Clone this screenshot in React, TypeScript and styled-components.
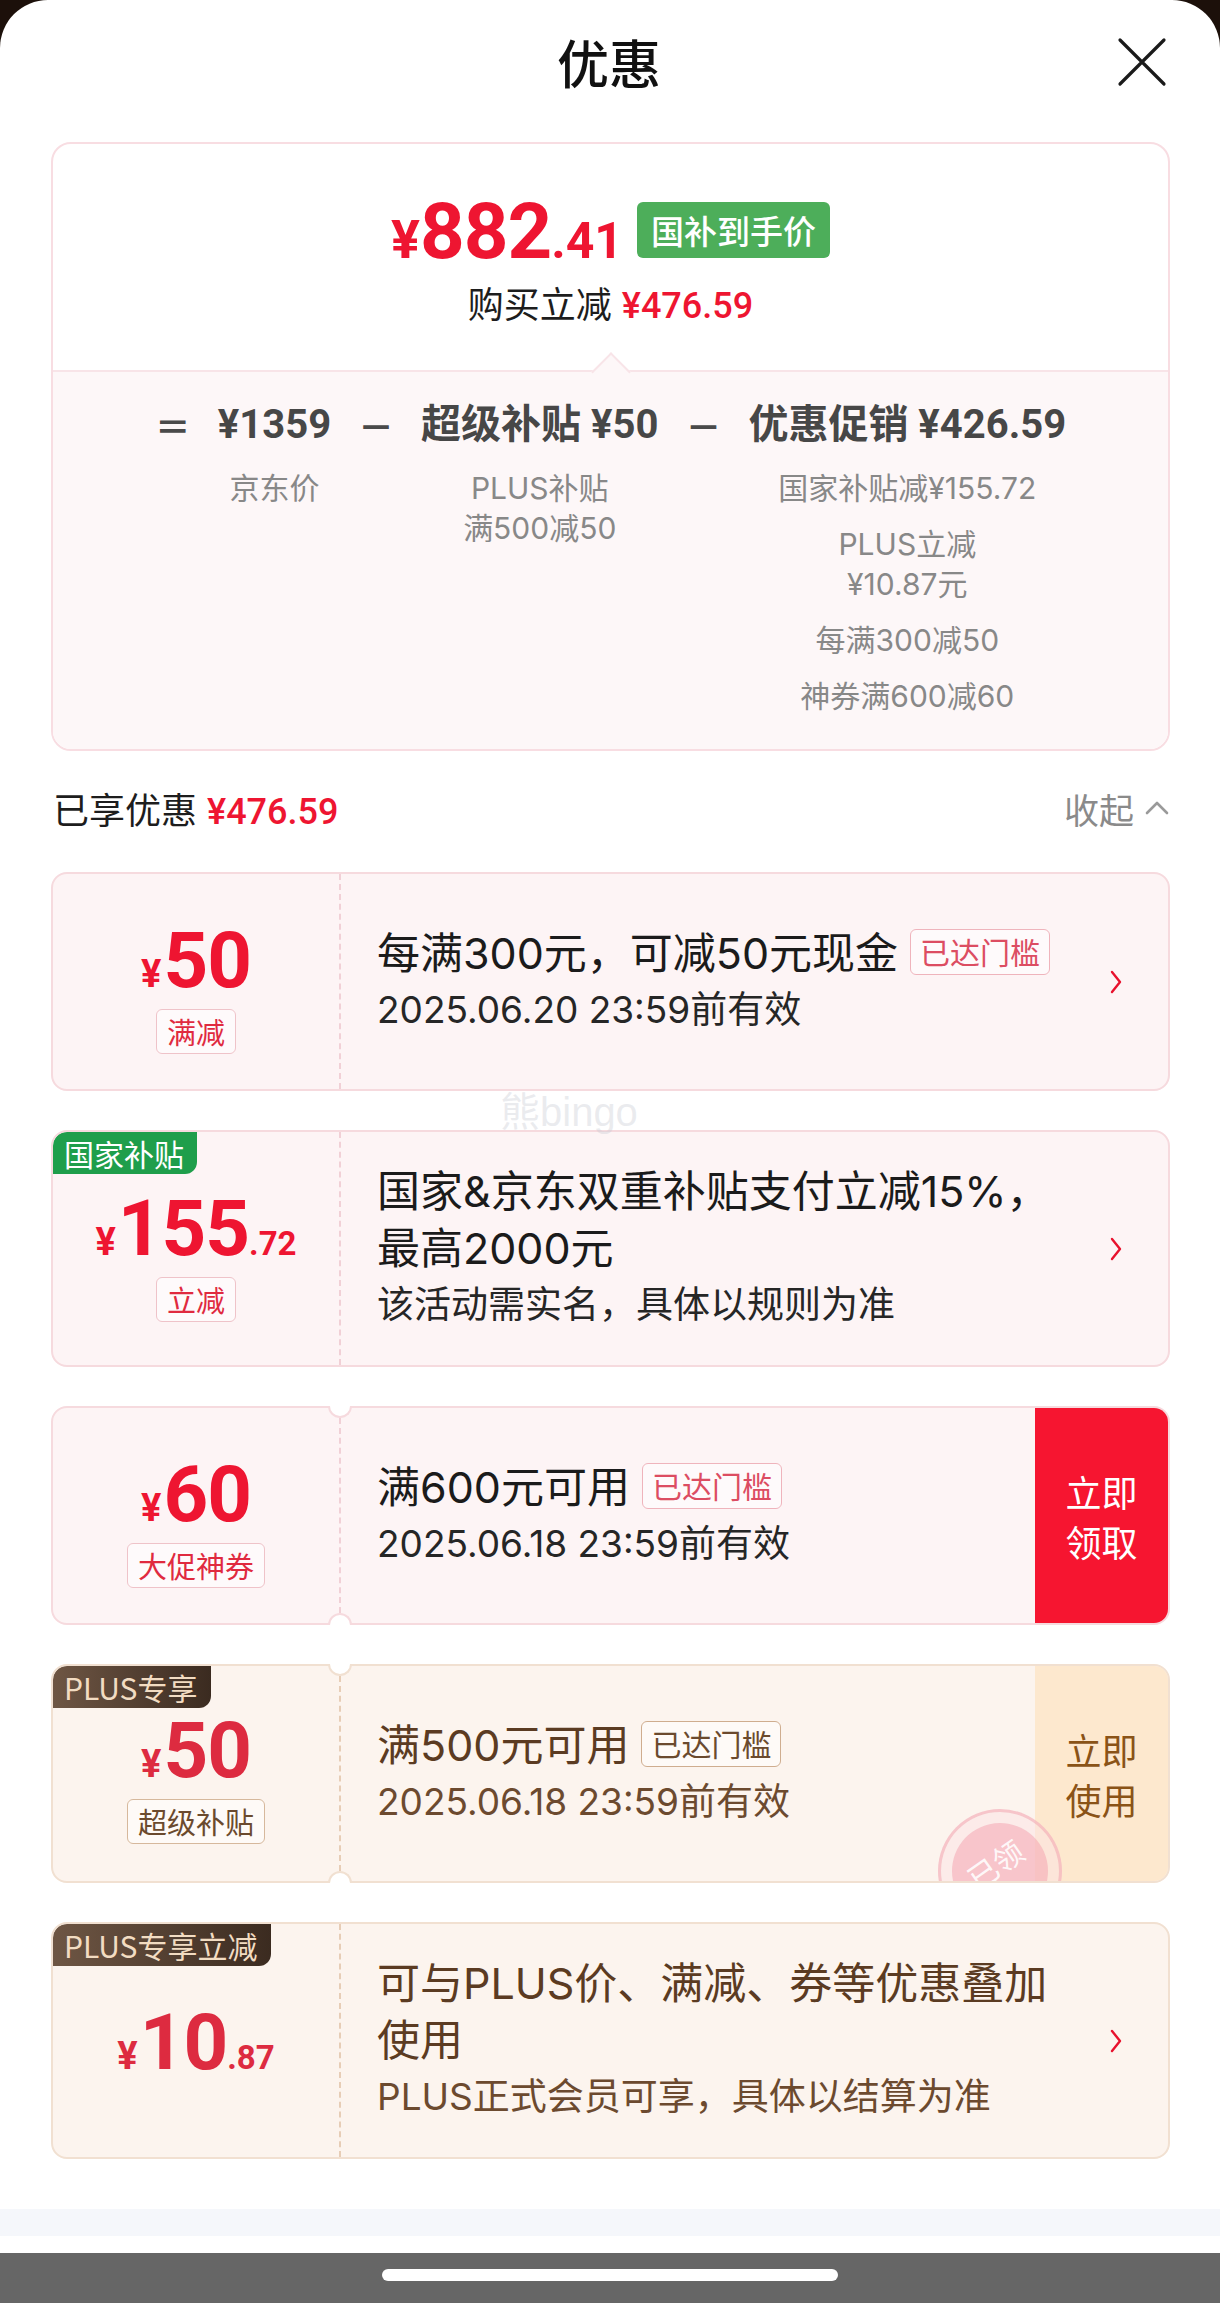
import React from "react";
import styled, { createGlobalStyle, css } from "styled-components";

type Tone = "red" | "plus";

const RED = "#ee1531";
const MIXED = `Inter, "Noto Sans CJK SC", sans-serif`;

const pal = {
  red: {
    bg: "#fdf4f5",
    border: "#f6dade",
    divider: "#f1d0d6",
    amount: "#ee1531",
    title: "#1b1b1b",
    sub: "#262626",
    tagText: "#e02a3f",
    tagBorder: "#efc3c9",
    thText: "#dc4d62",
    thBorder: "#efb4bc",
  },
  plus: {
    bg: "#fcf4ee",
    border: "#f1e0d1",
    divider: "#e7cdb6",
    amount: "#dd2b40",
    title: "#5b3b22",
    sub: "#6c4a2f",
    tagText: "#6b4a2e",
    tagBorder: "#d6b89c",
    thText: "#6b4a2e",
    thBorder: "#cfad8f",
  },
};

const GlobalStyle = createGlobalStyle`
  * { box-sizing: border-box; }
  html, body { margin: 0; padding: 0; }
  body {
    background: #1c100a;
    font-family: "Noto Sans CJK SC", "Noto Sans", sans-serif;
    color: #1b1b1b;
  }
`;

const Sheet = styled.div`
  position: relative;
  width: 1220px;
  height: 2303px;
  background: #fff;
  border-radius: 48px 48px 0 0;
  overflow: hidden;
  display: flex;
  flex-direction: column;
`;

const Header = styled.header`
  height: 124px;
  flex-shrink: 0;
  display: grid;
  grid-template-columns: 1fr auto 1fr;
  align-items: center;
  padding: 0 53px 0 51px;
`;

const SheetTitle = styled.h1`
  grid-column: 2;
  margin: 0;
  font-size: 52px;
  line-height: 1;
  font-weight: 500;
  color: #111;
`;

const CloseButton = styled.button`
  grid-column: 3;
  justify-self: end;
  width: 50px;
  height: 50px;
  padding: 0;
  border: 0;
  background: none;
  display: flex;
`;

const Main = styled.main`
  display: flex;
  flex-direction: column;
  padding: 18px 50px 0 51px;
`;

/* ---------- summary card ---------- */

const SummaryCard = styled.section`
  border: 2px solid #f8dde2;
  border-radius: 20px;
  overflow: hidden;
  background: #fff;
`;

const SummaryTop = styled.div`
  height: 226px;
  display: flex;
  flex-direction: column;
  align-items: center;
  padding-top: 56px;
`;

const PriceRow = styled.div`
  height: 60px;
  display: flex;
  align-items: center;
  gap: 14px;
`;

const BigPrice = styled.div`
  display: flex;
  align-items: baseline;
  color: ${RED};
  font-family: Roboto, sans-serif;
  font-weight: 700;
  line-height: 1;
  transform: translateY(2px);
`;

const BigYen = styled.span`
  font-size: 54px;
`;
const BigInt = styled.span`
  font-size: 78px;
  letter-spacing: -1px;
`;
const BigDec = styled.span`
  font-size: 50px;
`;

const GreenBadge = styled.span`
  height: 56px;
  padding: 0 14px;
  border-radius: 6px;
  background: #4dae5a;
  color: #fff;
  font-size: 33px;
  line-height: 56px;
  font-weight: 500;
`;

const SubLine = styled.div`
  margin-top: 22px;
  font-size: 36px;
  line-height: 40px;
  color: #1d1d1d;
  display: flex;
  align-items: baseline;
  gap: 10px;
`;

const RedNum = styled.span`
  color: ${RED};
  font-family: Roboto, "Noto Sans CJK SC", sans-serif;
  font-weight: 500;
  font-size: 36px;
`;

const SummaryBottom = styled.div`
  position: relative;
  background: #fdf7f8;
  border-top: 2px solid #f8e4e8;
  padding: 30px 0 33px;
  display: flex;
  justify-content: center;
  align-items: flex-start;
  gap: 27px;

  &::before {
    content: "";
    position: absolute;
    top: -14px;
    left: 50%;
    width: 26px;
    height: 26px;
    background: #fdf7f8;
    border-top: 2px solid #f8e4e8;
    border-left: 2px solid #f8e4e8;
    transform: translateX(-50%) rotate(45deg);
  }
`;

const Op = styled.span`
  font-family: "Noto Sans CJK SC", sans-serif;
  font-size: 36px;
  font-weight: 700;
  line-height: 46px;
  color: #4a4a4a;
`;

const Group = styled.div`
  display: flex;
  flex-direction: column;
  align-items: center;
`;

const GroupValue = styled.div`
  font-family: Roboto, "Noto Sans CJK SC", sans-serif;
  font-size: 40px;
  font-weight: 700;
  line-height: 46px;
  color: #474747;
  white-space: nowrap;
`;

const GroupNotes = styled.div`
  margin-top: 20px;
  display: flex;
  flex-direction: column;
  align-items: center;
  gap: 16px;
`;

const Note = styled.div`
  font-family: ${MIXED};
  font-size: 30px;
  line-height: 40px;
  color: #888;
  text-align: center;
  white-space: nowrap;
`;

/* ---------- discounts header ---------- */

const DiscountRow = styled.div`
  margin: 33px 0 40px;
  height: 48px;
  display: flex;
  align-items: center;
  justify-content: space-between;
  padding-left: 2px;
`;

const DiscountLabel = styled.div`
  font-size: 36px;
  color: #1d1d1d;
  display: flex;
  align-items: baseline;
  gap: 10px;
`;

const Collapse = styled.button`
  border: 0;
  background: none;
  padding: 0;
  display: flex;
  align-items: center;
  gap: 10px;
  font-family: inherit;
  font-size: 35px;
  color: #8a8a8a;
`;

/* ---------- coupons ---------- */

const CouponList = styled.div`
  display: flex;
  flex-direction: column;
  gap: 39px;
`;

const CouponWrap = styled.div`
  position: relative;
`;

const CouponCard = styled.article<{ $tone: Tone; $minH: number }>`
  position: relative;
  display: grid;
  grid-template-columns: 288px 1fr auto;
  min-height: ${(p) => p.$minH}px;
  background: ${(p) => pal[p.$tone].bg};
  border: 2px solid ${(p) => pal[p.$tone].border};
  border-radius: 16px;
  overflow: hidden;
`;

const CornerBadge = styled.span<{ $kind: "green" | "plus" }>`
  position: absolute;
  top: 0;
  left: 0;
  z-index: 2;
  height: 42px;
  padding: 0 13px 0 11px;
  display: flex;
  align-items: center;
  font-size: 30px;
  border-radius: 14px 0 12px 0;
  ${(p) =>
    p.$kind === "green"
      ? css`
          background: #1f9e4b;
          color: #fff;
        `
      : css`
          background: linear-gradient(90deg, #6e5644 0%, #3b2b20 100%);
          color: #f2dcc2;
        `}
`;

const AmountCol = styled.div<{ $tone: Tone; $offset: number }>`
  display: flex;
  flex-direction: column;
  align-items: center;
  justify-content: center;
  padding-top: ${(p) => p.$offset}px;
  border-right: 2px dashed ${(p) => pal[p.$tone].divider};
`;

const Amount = styled.div<{ $tone: Tone }>`
  display: flex;
  align-items: baseline;
  color: ${(p) => pal[p.$tone].amount};
  font-family: Roboto, sans-serif;
  font-weight: 700;
  line-height: 1;
`;

const AmtYen = styled.span`
  font-size: 38px;
  margin-right: 2px;
`;
const AmtInt = styled.span`
  font-size: 78px;
  letter-spacing: -1px;
`;
const AmtDec = styled.span`
  font-size: 33px;
`;

const AmountTag = styled.span<{ $tone: Tone }>`
  margin-top: 9px;
  height: 45px;
  padding: 0 10px;
  border: 1.5px solid ${(p) => pal[p.$tone].tagBorder};
  border-radius: 6px;
  background: rgba(255, 255, 255, 0.55);
  color: ${(p) => pal[p.$tone].tagText};
  font-size: 29px;
  line-height: 42px;
`;

const InfoCol = styled.div`
  display: flex;
  flex-direction: column;
  justify-content: center;
  padding: 31px 0 32px 36px;
`;

const CTitle = styled.div<{ $tone: Tone }>`
  font-family: ${MIXED};
  font-size: 43px;
  line-height: 57px;
  color: ${(p) => pal[p.$tone].title};
`;

const CSub = styled.div<{ $tone: Tone }>`
  font-family: ${MIXED};
  font-size: 37px;
  line-height: 56px;
  color: ${(p) => pal[p.$tone].sub};
`;

const Threshold = styled.span<{ $tone: Tone }>`
  display: inline-block;
  vertical-align: top;
  margin: 4px 0 0 12px;
  height: 46px;
  padding: 0 9px;
  border: 1.5px solid ${(p) => pal[p.$tone].thBorder};
  border-radius: 6px;
  background: rgba(255, 255, 255, 0.55);
  color: ${(p) => pal[p.$tone].thText};
  font-family: "Noto Sans CJK SC", sans-serif;
  font-size: 30px;
  line-height: 43px;
`;

const ChevronCell = styled.div`
  width: 104px;
  display: flex;
  align-items: center;
  justify-content: center;
`;

const ActionButton = styled.button<{ $variant: Tone }>`
  width: 133px;
  border: 0;
  padding: 0;
  position: relative;
  z-index: 1;
  display: flex;
  align-items: center;
  justify-content: center;
  font-family: inherit;
  font-size: 36px;
  line-height: 50px;
  ${(p) =>
    p.$variant === "red"
      ? css`
          background: #f61530;
          color: #fff;
        `
      : css`
          background: rgba(253, 230, 203, 0.92);
          color: #8a5317;
        `}
`;

const Notch = styled.span<{ $pos: "top" | "bottom"; $tone: Tone }>`
  position: absolute;
  left: 277px;
  width: 24px;
  height: 12px;
  background: #fff;
  border: 2px solid ${(p) => pal[p.$tone].border};
  z-index: 3;
  ${(p) =>
    p.$pos === "top"
      ? css`
          top: 0;
          border-top: none;
          border-radius: 0 0 12px 12px;
        `
      : css`
          bottom: 0;
          border-bottom: none;
          border-radius: 12px 12px 0 0;
        `}
`;

const Stamp = styled.div`
  position: absolute;
  left: 885px;
  top: 143px;
  width: 124px;
  height: 124px;
  border-radius: 50%;
  border: 3px solid rgba(242, 160, 172, 0.5);
  background: rgba(252, 226, 228, 0.5);
  display: flex;
  align-items: center;
  justify-content: center;
  z-index: 2;
  pointer-events: none;
`;

const StampInner = styled.div`
  width: 96px;
  height: 96px;
  border-radius: 50%;
  background: rgba(244, 160, 174, 0.5);
  display: flex;
  align-items: center;
  justify-content: center;
  padding-bottom: 18px;
  color: rgba(255, 255, 255, 0.9);
  font-size: 30px;
  transform: rotate(-35deg);
`;

const Watermark = styled.div`
  position: absolute;
  left: 500px;
  top: 1080px;
  font-family: "Liberation Sans", "Noto Sans CJK SC", sans-serif;
  font-size: 40px;
  color: rgba(195, 198, 208, 0.35);
  pointer-events: none;
`;

/* ---------- bottom ---------- */

const BottomArea = styled.div`
  margin-top: auto;
  display: flex;
  flex-direction: column;
`;

const LightBand = styled.div`
  height: 27px;
  background: #f5f7fb;
  margin-bottom: 17px;
`;

const HomeBar = styled.div`
  height: 50px;
  background: #666;
  display: flex;
  justify-content: center;
  padding-top: 16px;
`;

const HomePill = styled.span`
  width: 456px;
  height: 12px;
  border-radius: 6px;
  background: #fff;
`;

/* ---------- icons ---------- */

const CloseIcon = () => (
  <svg width="50" height="50" viewBox="0 0 50 50">
    <path d="M3 3 L47 47 M47 3 L3 47" stroke="#1a1a1a" strokeWidth="3.2" strokeLinecap="round" />
  </svg>
);

const ChevronUp = () => (
  <svg width="26" height="16" viewBox="0 0 26 16">
    <path d="M3 13 L13 3 L23 13" fill="none" stroke="#9a9a9a" strokeWidth="2.6" strokeLinecap="round" strokeLinejoin="round" />
  </svg>
);

const ChevronRight = () => (
  <svg width="14" height="26" viewBox="0 0 14 26">
    <path d="M3 3 L11 13 L3 23" fill="none" stroke="#e8112d" strokeWidth="2.4" strokeLinecap="round" strokeLinejoin="round" />
  </svg>
);

/* ---------- coupon component ---------- */

interface CouponProps {
  tone: Tone;
  minH: number;
  offset: number;
  badge?: { text: string; kind: "green" | "plus" };
  int: string;
  dec?: string;
  tag?: string;
  title: React.ReactNode;
  threshold?: boolean;
  sub?: string;
  button?: { lines: [string, string]; variant: Tone };
  notched?: boolean;
  stamp?: boolean;
}

const Coupon: React.FC<CouponProps> = ({
  tone,
  minH,
  offset,
  badge,
  int,
  dec,
  tag,
  title,
  threshold,
  sub,
  button,
  notched,
  stamp,
}) => (
  <CouponWrap>
    <CouponCard $tone={tone} $minH={minH}>
      {badge && <CornerBadge $kind={badge.kind}>{badge.text}</CornerBadge>}
      <AmountCol $tone={tone} $offset={offset}>
        <Amount $tone={tone}>
          <AmtYen>¥</AmtYen>
          <AmtInt>{int}</AmtInt>
          {dec && <AmtDec>{dec}</AmtDec>}
        </Amount>
        {tag && <AmountTag $tone={tone}>{tag}</AmountTag>}
      </AmountCol>
      <InfoCol>
        <CTitle $tone={tone}>
          {title}
          {threshold && <Threshold $tone={tone}>已达门槛</Threshold>}
        </CTitle>
        {sub && <CSub $tone={tone}>{sub}</CSub>}
      </InfoCol>
      {button ? (
        <ActionButton $variant={button.variant}>
          {button.lines[0]}
          <br />
          {button.lines[1]}
        </ActionButton>
      ) : (
        <ChevronCell>
          <ChevronRight />
        </ChevronCell>
      )}
      {stamp && (
        <Stamp>
          <StampInner>已领</StampInner>
        </Stamp>
      )}
    </CouponCard>
    {notched && (
      <>
        <Notch $pos="top" $tone={tone} />
        <Notch $pos="bottom" $tone={tone} />
      </>
    )}
  </CouponWrap>
);

export default function App() {
  return (
    <>
      <GlobalStyle />
      <Sheet>
        <Header>
          <SheetTitle>优惠</SheetTitle>
          <CloseButton aria-label="关闭">
            <CloseIcon />
          </CloseButton>
        </Header>

        <Main>
          <SummaryCard>
            <SummaryTop>
              <PriceRow>
                <BigPrice>
                  <BigYen>¥</BigYen>
                  <BigInt>882</BigInt>
                  <BigDec>.41</BigDec>
                </BigPrice>
                <GreenBadge>国补到手价</GreenBadge>
              </PriceRow>
              <SubLine>
                购买立减<RedNum>¥476.59</RedNum>
              </SubLine>
            </SummaryTop>
            <SummaryBottom>
              <Op>＝</Op>
              <Group>
                <GroupValue>¥1359</GroupValue>
                <GroupNotes>
                  <Note>京东价</Note>
                </GroupNotes>
              </Group>
              <Op>－</Op>
              <Group>
                <GroupValue>超级补贴 ¥50</GroupValue>
                <GroupNotes>
                  <Note>
                    PLUS补贴
                    <br />
                    满500减50
                  </Note>
                </GroupNotes>
              </Group>
              <Op>－</Op>
              <Group>
                <GroupValue>优惠促销 ¥426.59</GroupValue>
                <GroupNotes>
                  <Note>国家补贴减¥155.72</Note>
                  <Note>
                    PLUS立减
                    <br />
                    ¥10.87元
                  </Note>
                  <Note>每满300减50</Note>
                  <Note>神券满600减60</Note>
                </GroupNotes>
              </Group>
            </SummaryBottom>
          </SummaryCard>

          <DiscountRow>
            <DiscountLabel>
              已享优惠<RedNum>¥476.59</RedNum>
            </DiscountLabel>
            <Collapse>
              收起
              <ChevronUp />
            </Collapse>
          </DiscountRow>

          <CouponList>
            <Coupon
              tone="red"
              minH={219}
              offset={12}
              int="50"
              tag="满减"
              title="每满300元，可减50元现金"
              threshold
              sub="2025.06.20 23:59前有效"
            />
            <Coupon
              tone="red"
              minH={219}
              offset={14}
              badge={{ text: "国家补贴", kind: "green" }}
              int="155"
              dec=".72"
              tag="立减"
              title={
                <>
                  国家&amp;京东双重补贴支付立减15%，
                  <br />
                  最高2000元
                </>
              }
              sub="该活动需实名，具体以规则为准"
            />
            <Coupon
              tone="red"
              minH={219}
              offset={12}
              int="60"
              tag="大促神券"
              title="满600元可用"
              threshold
              sub="2025.06.18 23:59前有效"
              button={{ lines: ["立即", "领取"], variant: "red" }}
              notched
            />
            <Coupon
              tone="plus"
              minH={219}
              offset={9}
              badge={{ text: "PLUS专享", kind: "plus" }}
              int="50"
              tag="超级补贴"
              title="满500元可用"
              threshold
              sub="2025.06.18 23:59前有效"
              button={{ lines: ["立即", "使用"], variant: "plus" }}
              notched
              stamp
            />
            <Coupon
              tone="plus"
              minH={219}
              offset={4}
              badge={{ text: "PLUS专享立减", kind: "plus" }}
              int="10"
              dec=".87"
              title={
                <>
                  可与PLUS价、满减、券等优惠叠加
                  <br />
                  使用
                </>
              }
              sub="PLUS正式会员可享，具体以结算为准"
            />
          </CouponList>
        </Main>

        <Watermark>熊bingo</Watermark>

        <BottomArea>
          <LightBand />
          <HomeBar>
            <HomePill />
          </HomeBar>
        </BottomArea>
      </Sheet>
    </>
  );
}
